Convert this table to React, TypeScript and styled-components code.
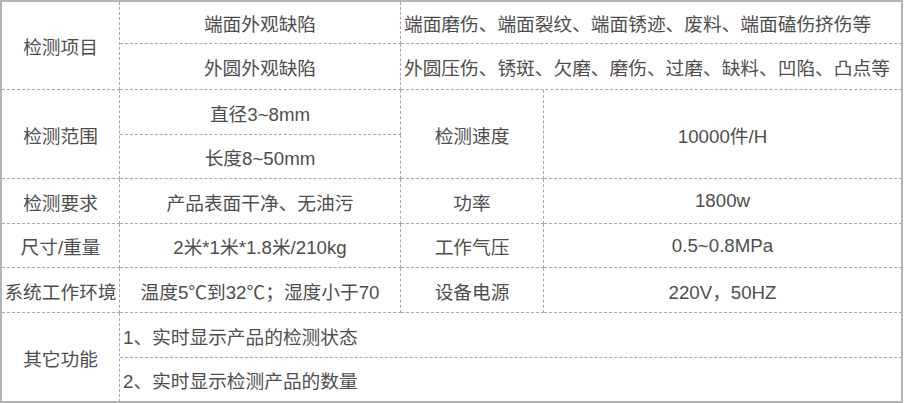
import React from "react";
import styled, { createGlobalStyle } from "styled-components";

const Global = createGlobalStyle`
  html, body { margin: 0; padding: 0; background: #fff; }
  body { font-family: "Liberation Sans", "Noto Sans CJK SC", sans-serif; }
`;

const Frame = styled.div`
  width: 903px;
  height: 403px;
  box-sizing: border-box;
  border: 2px solid #b4b4b4;
  overflow: hidden;
  background: #fff;
`;

const Grid = styled.div`
  display: grid;
  margin: 0 -1px -1px 0;
  grid-template-columns: 118px 281px 143px 1fr;
  grid-template-rows: 42px 46px 45px 44px 45px 44px 45px 45px 44px;
`;

const Cell = styled.div<{ $span?: number; $rows?: number; $left?: boolean }>`
  grid-column: span ${(p) => p.$span ?? 1};
  grid-row: span ${(p) => p.$rows ?? 1};
  display: flex;
  align-items: center;
  justify-content: ${(p) => (p.$left ? "flex-start" : "center")};
  padding: ${(p) => (p.$left ? "0 0 0 3px" : "0")};
  border-right: 1px dashed #a8a8a8;
  border-bottom: 1px dashed #a8a8a8;
  color: #4e4e4e;
  font-size: 18.7px;
  white-space: nowrap;
  overflow: hidden;
`;

export default function App() {
  return (
    <>
      <Global />
      <Frame>
        <Grid>
          <Cell $rows={2}>检测项目</Cell>
          <Cell>端面外观缺陷</Cell>
          <Cell $span={2} $left>端面磨伤、端面裂纹、端面锈迹、废料、端面磕伤挤伤等</Cell>
          <Cell>外圆外观缺陷</Cell>
          <Cell $span={2} $left>外圆压伤、锈斑、欠磨、磨伤、过磨、缺料、凹陷、凸点等</Cell>

          <Cell $rows={2}>检测范围</Cell>
          <Cell>直径3~8mm</Cell>
          <Cell $rows={2}>检测速度</Cell>
          <Cell $rows={2}>10000件/H</Cell>
          <Cell>长度8~50mm</Cell>

          <Cell>检测要求</Cell>
          <Cell>产品表面干净、无油污</Cell>
          <Cell>功率</Cell>
          <Cell>1800w</Cell>

          <Cell>尺寸/重量</Cell>
          <Cell>2米*1米*1.8米/210kg</Cell>
          <Cell>工作气压</Cell>
          <Cell>0.5~0.8MPa</Cell>

          <Cell>系统工作环境</Cell>
          <Cell>温度5℃到32℃；湿度小于70</Cell>
          <Cell>设备电源</Cell>
          <Cell>220V，50HZ</Cell>

          <Cell $rows={2}>其它功能</Cell>
          <Cell $span={3} $left>1、实时显示产品的检测状态</Cell>
          <Cell $span={3} $left>2、实时显示检测产品的数量</Cell>
        </Grid>
      </Frame>
    </>
  );
}
